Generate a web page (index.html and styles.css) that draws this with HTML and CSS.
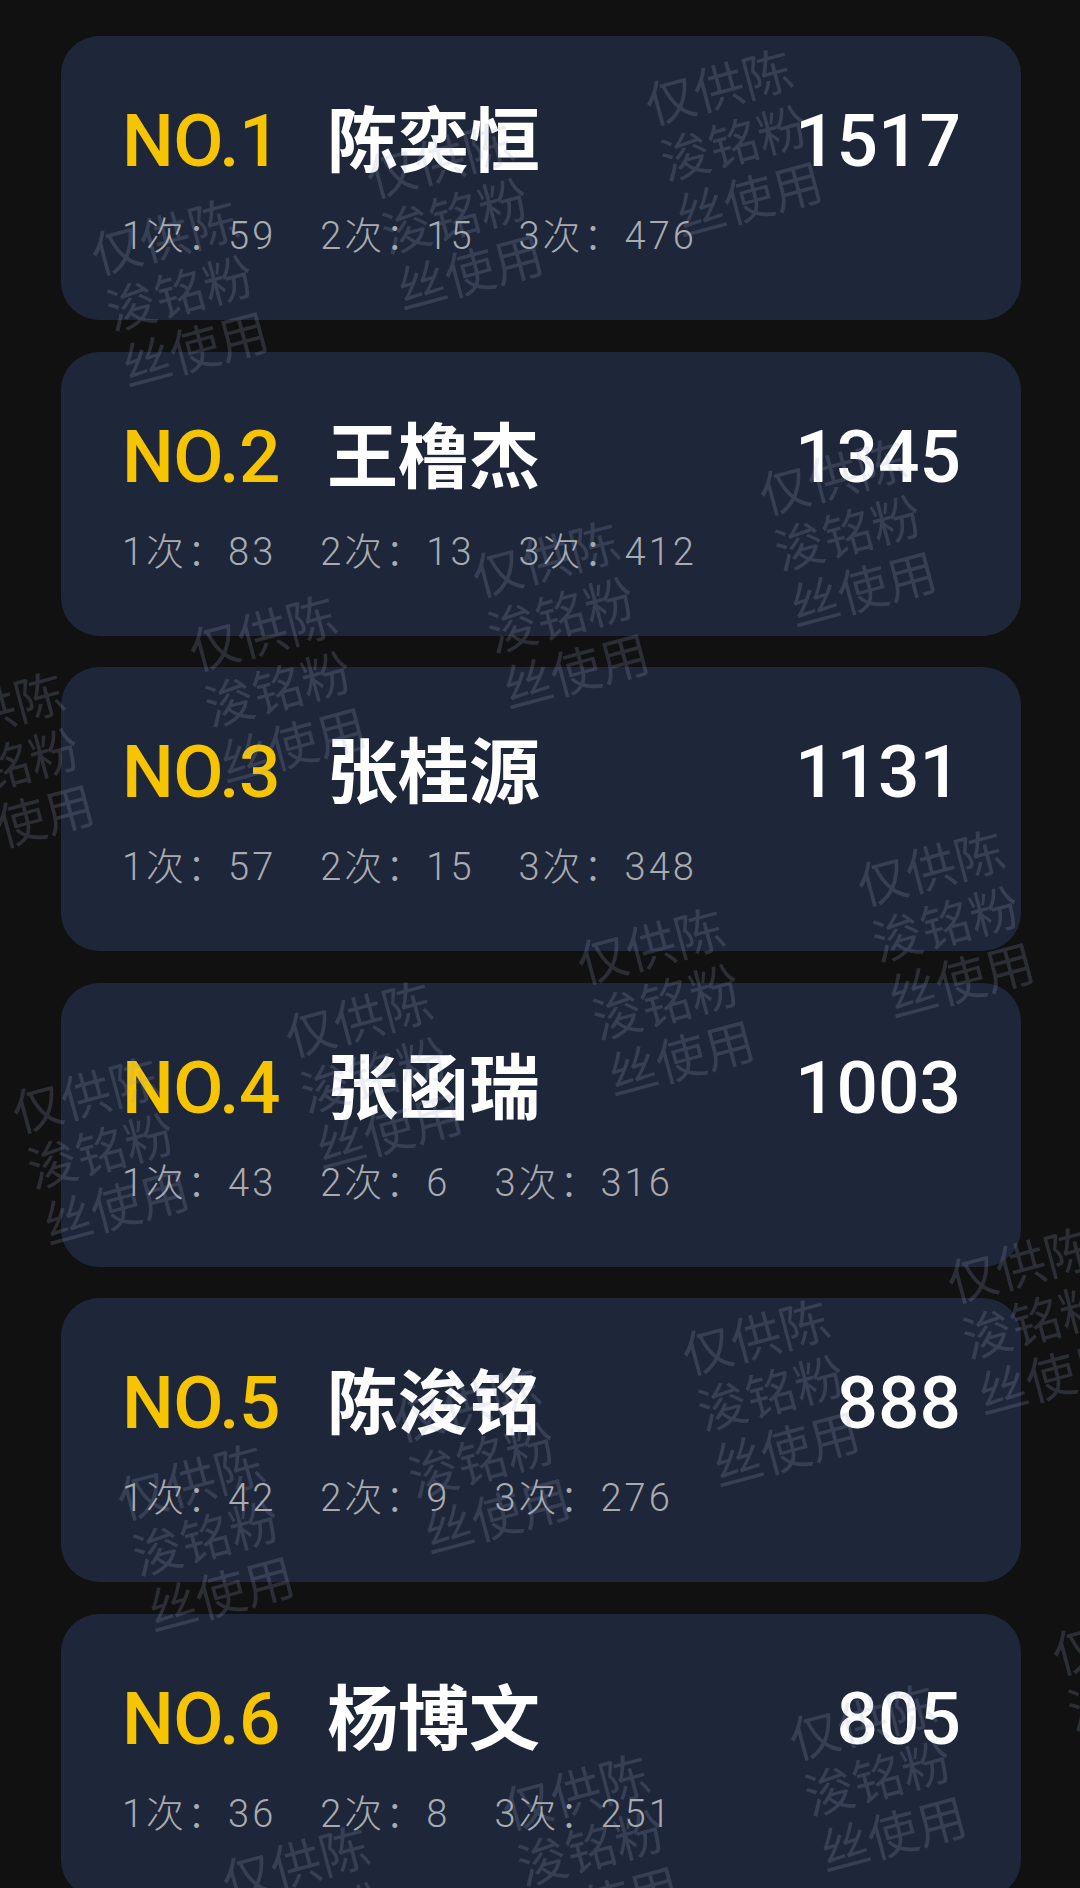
FILE: index.html
```html
<!DOCTYPE html>
<html lang="zh-CN">
<head>
<meta charset="utf-8">
<title>排行</title>
<link rel="stylesheet" href="styles.css">
</head>
<body>
<div class="page">
  <div class="list">
    <div class="card">
      <div class="top"><span class="rank">NO.1</span><span class="name">陈奕恒</span><span class="score">1517</span></div>
      <div class="sub"><span class="item">1次：59</span><span class="item">2次：15</span><span class="item">3次：476</span></div>
    </div>
    <div class="card">
      <div class="top"><span class="rank">NO.2</span><span class="name">王橹杰</span><span class="score">1345</span></div>
      <div class="sub"><span class="item">1次：83</span><span class="item">2次：13</span><span class="item">3次：412</span></div>
    </div>
    <div class="card">
      <div class="top"><span class="rank">NO.3</span><span class="name">张桂源</span><span class="score">1131</span></div>
      <div class="sub"><span class="item">1次：57</span><span class="item">2次：15</span><span class="item">3次：348</span></div>
    </div>
    <div class="card">
      <div class="top"><span class="rank">NO.4</span><span class="name">张函瑞</span><span class="score">1003</span></div>
      <div class="sub"><span class="item">1次：43</span><span class="item">2次：6</span><span class="item">3次：316</span></div>
    </div>
    <div class="card">
      <div class="top"><span class="rank">NO.5</span><span class="name">陈浚铭</span><span class="score">888</span></div>
      <div class="sub"><span class="item">1次：42</span><span class="item">2次：9</span><span class="item">3次：276</span></div>
    </div>
    <div class="card">
      <div class="top"><span class="rank">NO.6</span><span class="name">杨博文</span><span class="score">805</span></div>
      <div class="sub"><span class="item">1次：36</span><span class="item">2次：8</span><span class="item">3次：251</span></div>
    </div>
  </div>

  <div class="marks" aria-hidden="true">
    <div class="wm" style="left:733px;top:140px">仅供陈<br>浚铭粉<br>丝使用</div>
    <div class="wm" style="left:179px;top:290px">仅供陈<br>浚铭粉<br>丝使用</div>
    <div class="wm" style="left:454px;top:213px">仅供陈<br>浚铭粉<br>丝使用</div>
    <div class="wm" style="left:847px;top:530px">仅供陈<br>浚铭粉<br>丝使用</div>
    <div class="wm" style="left:560px;top:612px">仅供陈<br>浚铭粉<br>丝使用</div>
    <div class="wm" style="left:277px;top:686px">仅供陈<br>浚铭粉<br>丝使用</div>
    <div class="wm" style="left:5px;top:763px">仅供陈<br>浚铭粉<br>丝使用</div>
    <div class="wm" style="left:945px;top:921px">仅供陈<br>浚铭粉<br>丝使用</div>
    <div class="wm" style="left:665px;top:999px">仅供陈<br>浚铭粉<br>丝使用</div>
    <div class="wm" style="left:373px;top:1072px">仅供陈<br>浚铭粉<br>丝使用</div>
    <div class="wm" style="left:100px;top:1148px">仅供陈<br>浚铭粉<br>丝使用</div>
    <div class="wm" style="left:1035px;top:1318px">仅供陈<br>浚铭粉<br>丝使用</div>
    <div class="wm" style="left:770px;top:1390px">仅供陈<br>浚铭粉<br>丝使用</div>
    <div class="wm" style="left:481px;top:1457px">仅供陈<br>浚铭粉<br>丝使用</div>
    <div class="wm" style="left:205px;top:1535px">仅供陈<br>浚铭粉<br>丝使用</div>
    <div class="wm" style="left:1140px;top:1690px">仅供陈<br>浚铭粉<br>丝使用</div>
    <div class="wm" style="left:877px;top:1775px">仅供陈<br>浚铭粉<br>丝使用</div>
    <div class="wm" style="left:590px;top:1845px">仅供陈<br>浚铭粉<br>丝使用</div>
    <div class="wm" style="left:310px;top:1917px">仅供陈<br>浚铭粉<br>丝使用</div>
  </div>
</div>
</body>
</html>
```

FILE: styles.css
```css
html, body {
  margin: 0;
  padding: 0;
  background: #111111;
}

body {
  width: 1080px;
  height: 1888px;
  overflow: hidden;
  font-family: Roboto, "Noto Sans CJK SC", sans-serif;
}

.page {
  position: relative;
  width: 1080px;
  height: 1888px;
  overflow: hidden;
}

.list {
  display: flex;
  flex-direction: column;
  gap: 31.5px;
  padding: 36px 59px 0 61px;
}

.card {
  box-sizing: border-box;
  height: 284px;
  border-radius: 38px;
  background: #1e2639;
  padding: 62px 60px 0 61px;
}

.top {
  display: flex;
  align-items: baseline;
}

.rank {
  width: 205px;
  flex: none;
  font-family: Roboto, sans-serif;
  font-weight: 500;
  font-size: 73px;
  line-height: 74px;
  color: #f6c400;
  letter-spacing: -0.5px;
}

.name {
  font-family: "Noto Sans CJK SC", sans-serif;
  font-weight: 700;
  font-size: 71px;
  line-height: 74px;
  color: #ffffff;
}

.score {
  margin-left: auto;
  font-family: Roboto, sans-serif;
  font-weight: 500;
  font-size: 73px;
  line-height: 74px;
  color: #ffffff;
}

.sub {
  margin-top: 40px;
  display: flex;
  font-family: Roboto, "Noto Sans CJK SC", sans-serif;
  font-weight: 300;
  font-size: 38px;
  line-height: 37px;
  letter-spacing: 3px;
  color: #a9abb2;
}

.item {
  margin-right: 44px;
  white-space: nowrap;
}

.marks {
  position: absolute;
  inset: 0;
  pointer-events: none;
}

.wm {
  position: absolute;
  width: 150px;
  transform: translate(-50%, -50%) rotate(-15deg);
  font-family: "Noto Sans CJK SC", sans-serif;
  font-weight: 400;
  font-size: 50px;
  line-height: 58px;
  text-align: center;
  white-space: nowrap;
  color: rgba(150, 166, 195, 0.2);
}
```
